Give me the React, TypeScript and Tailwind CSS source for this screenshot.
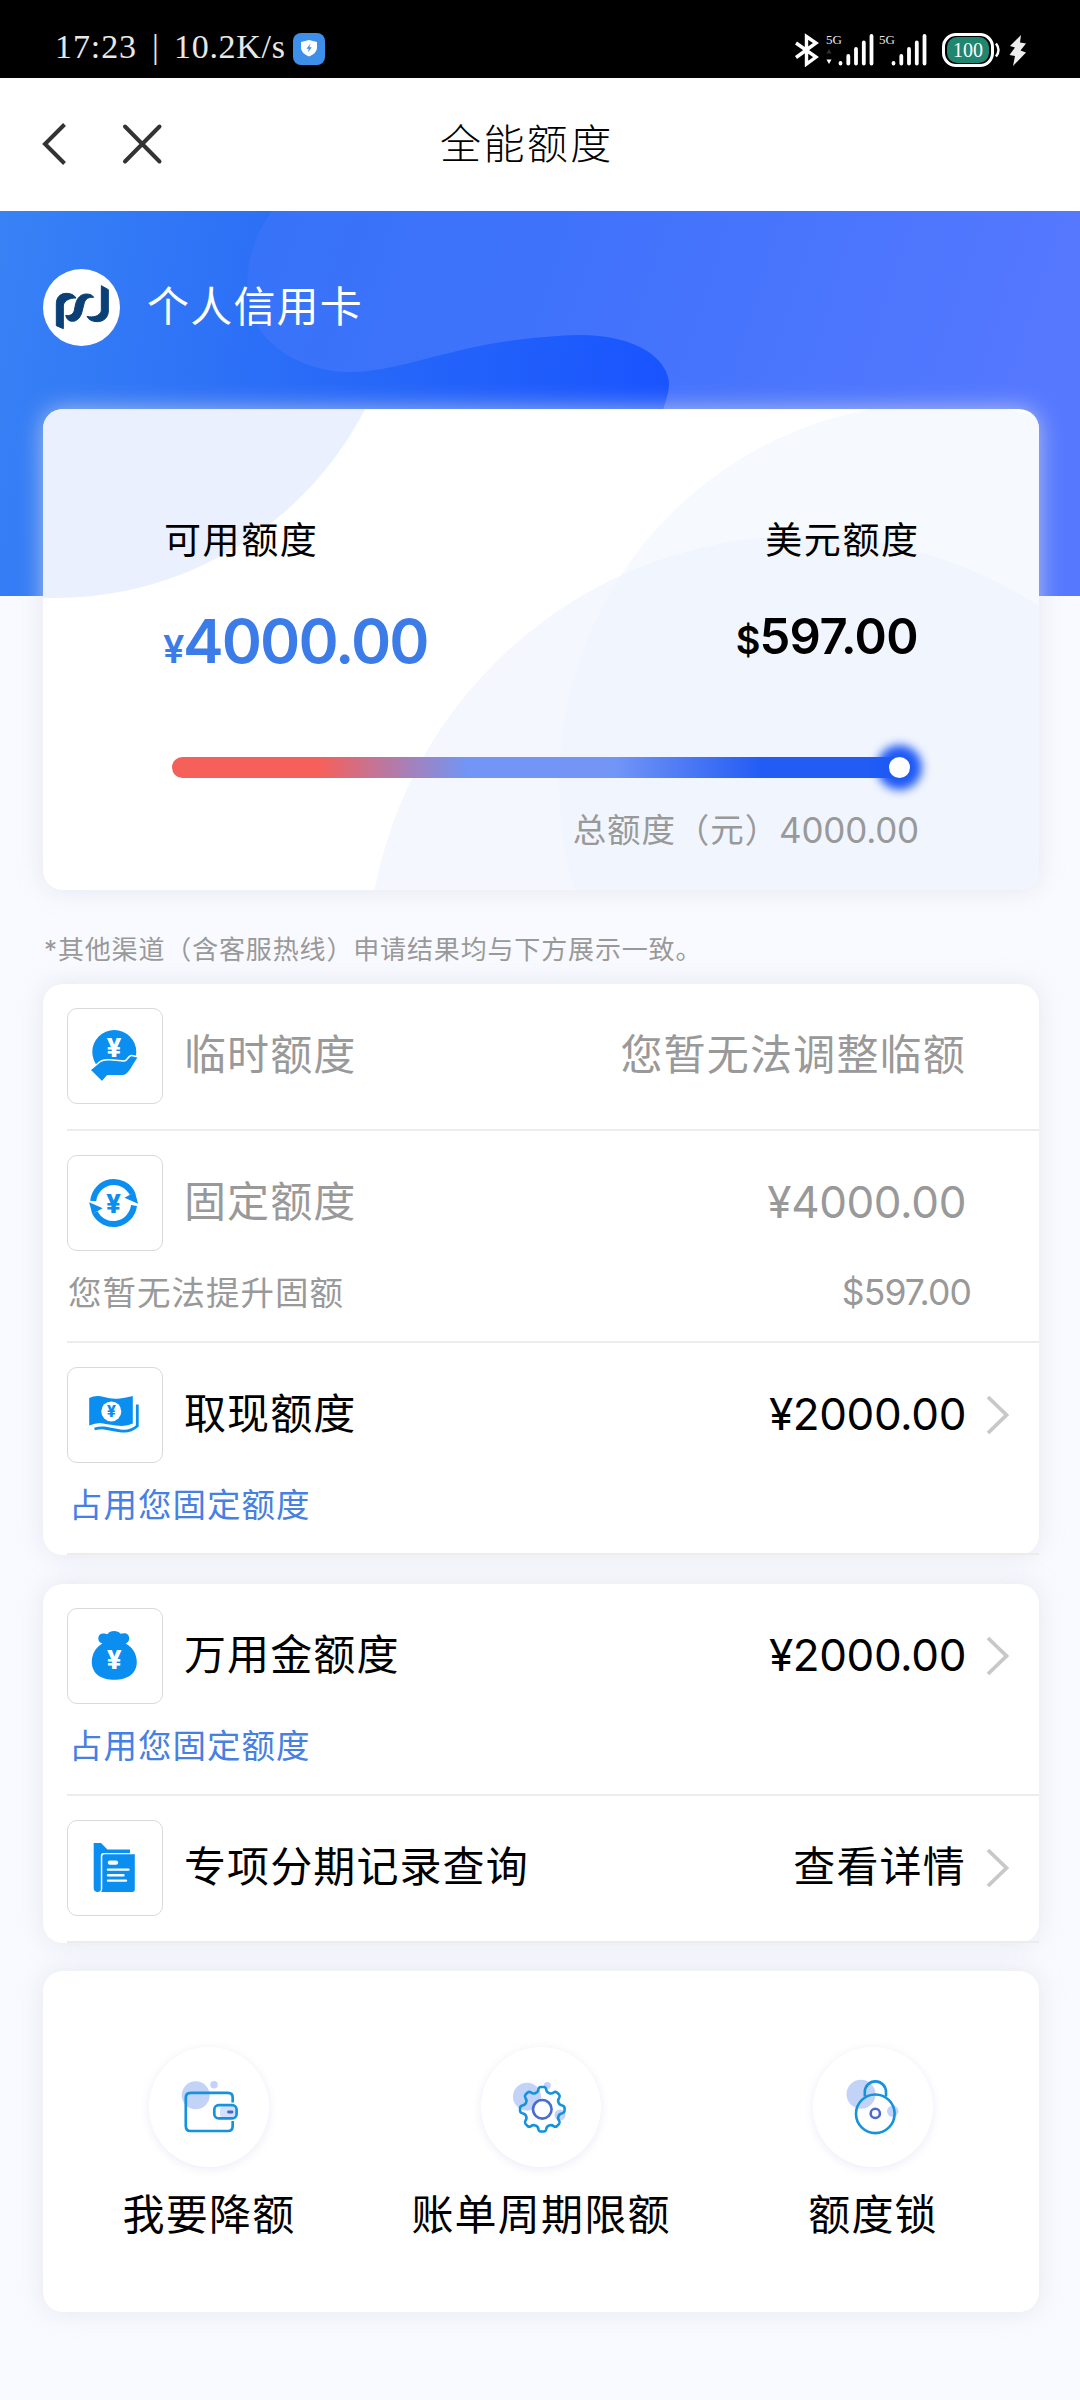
import type { ReactNode } from "react";

const BLUE = "#0a8ef0";

function Yuan({ x, y, size, fill }: { x: number; y: number; size: number; fill: string }) {
  return (
    <text x={x} y={y} fontSize={size} fill={fill} fontWeight={800} textAnchor="middle" fontFamily="Inter, sans-serif">
      ¥
    </text>
  );
}

function HandIcon() {
  return (
    <svg viewBox="0 0 96 96" className="size-full">
      <circle cx="48.3" cy="44" r="22" fill={BLUE} />
      <path
        d="M24 62 L33 54.5 C36 51.5 40 51.5 44 51.8 L58 53 C61 53 61 50 64 48 C66.5 46 69 49.5 73 48.5 L67 58 C64 63 61.5 67.8 57 67.8 L41.5 67.8 L36 74 Z"
        fill={BLUE}
        stroke="#fff"
        strokeWidth="1.6"
      />
      <Yuan x={48} y={49} size={26} fill="#fff" />
    </svg>
  );
}

function CycleIcon() {
  return (
    <svg viewBox="0 0 96 96" className="size-full">
      <g fill="none" stroke={BLUE} strokeWidth="6">
        <path d="M27.2 46 A20.8 21.3 0 0 1 66.5 38.8" />
        <path d="M68 50.5 A20.8 21.3 0 0 1 28.9 57.5" />
      </g>
      <g fill={BLUE}>
        <path d="M72 48.8 L58.5 42.8 L69 37 Z" />
        <path d="M23.2 47.2 L36.7 53.2 L26.2 59 Z" />
      </g>
      <Yuan x={47.6} y={58} size={26} fill={BLUE} />
    </svg>
  );
}

function CashIcon() {
  return (
    <svg viewBox="0 0 96 96" className="size-full">
      <path d="M23.2 31 Q30 27.5 38 30 T54 31.5 Q60 30.5 66.8 29 V56.5 Q60 60 50 58.5 T34 56 Q29 56 23.2 58.5 Z" fill={BLUE} />
      <path d="M71.3 37.5 V59 Q64 65.5 54 63.8 T38 61 Q33 60.8 28.5 62" fill="none" stroke={BLUE} strokeWidth="2.8" />
      <circle cx="45.3" cy="44.4" r="10" fill="#fff" />
      <Yuan x={45.3} y={50.2} size={16} fill={BLUE} />
    </svg>
  );
}

function BagIcon() {
  return (
    <svg viewBox="0 0 96 96" className="size-full">
      <path
        d="M36.5 35.5 C31 35 31 26.5 36 25.6 C39 25 41 26.5 42 25.8 C43.5 22.3 52 22 54.5 25.8 C57 25 61 24.5 62.5 27.5 C64.5 31.5 62 35 59.5 35.5 C66.5 39 70.8 46 70.8 54 C70.8 66 61 71.8 48.3 71.8 C35.5 71.8 25.8 66 25.8 54 C25.8 46 30 39 36.5 35.5 Z"
        fill={BLUE}
      />
      <Yuan x={48.2} y={61} size={26} fill="#fff" />
    </svg>
  );
}

function RecordIcon() {
  return (
    <svg viewBox="0 0 96 96" className="size-full">
      <path d="M27.7 23 H35 L41.5 29.5 H64 V33 H37 Q34.8 33 34.8 35.5 V70 Q34 72.3 31 72 Q27.7 71.5 27.7 68 Z" fill={BLUE} />
      <path d="M36.3 36.5 Q36.3 34.3 38.5 34.3 H68.8 V69.5 Q68.8 72 66 72 H35 Q36.3 71 36.3 69 Z" fill={BLUE} />
      <path d="M44 42.6 H50" stroke="#fff" strokeWidth="4.4" strokeLinecap="round" />
      <path d="M42 49.6 H62.5 M42 55.2 H57.5 M42 60.6 H60" stroke="#fff" strokeWidth="2.4" strokeLinecap="round" />
    </svg>
  );
}

function WalletIcon() {
  return (
    <svg viewBox="0 0 120 120" className="size-full" fill="none">
      <circle cx="46.7" cy="48.3" r="14" fill="#c3d3f8" />
      <circle cx="65" cy="37.8" r="3.8" fill="#c3d3f8" />
      <path d="M83.7 55.5 V50.5 Q83.7 45.8 79 45.8 H41.5 Q36.8 45.8 36.8 50.5 V79 Q36.8 84 41.5 84 H79 Q83.7 84 83.7 79 V74" stroke="#1592dc" strokeWidth="2.7" />
      <rect x="71" y="59.5" width="16" height="11" rx="3" fill="#d3dffb" />
      <rect x="65.3" y="58.2" width="22.3" height="13.2" rx="4.5" stroke="#1592dc" strokeWidth="2.7" />
      <path d="M79.5 65 H83" stroke="#4766cc" strokeWidth="2.8" strokeLinecap="round" />
    </svg>
  );
}

const TEETH = [0, 45, 90, 135, 180, 225, 270, 315];

/** Outline of an eight-toothed gear with rounded teeth, centred on (cx, cy). */
function gearPath(cx: number, cy: number, outer: number, inner: number) {
  const at = (deg: number, r: number) => {
    const a = ((deg - 90) * Math.PI) / 180;
    return `${(cx + r * Math.cos(a)).toFixed(2)} ${(cy + r * Math.sin(a)).toFixed(2)}`;
  };
  const segments = TEETH.map((t) => {
    const edge = outer - 2;
    return [
      `${t === 0 ? "M" : "L"}${at(t - 11, edge)}`,
      `Q${at(t - 9, outer)} ${at(t - 4, outer)}`,
      `L${at(t + 4, outer)}`,
      `Q${at(t + 9, outer)} ${at(t + 11, edge)}`,
      `Q${at(t + 14, inner)} ${at(t + 22.5, inner)}`,
      `Q${at(t + 31, inner)} ${at(t + 34, edge)}`,
    ].join(" ");
  });
  return `${segments.join(" ")} Z`;
}

function GearIcon() {
  return (
    <svg viewBox="0 0 120 120" className="size-full" fill="none">
      <circle cx="46" cy="49.7" r="14" fill="#c3d3f8" />
      <circle cx="66.3" cy="38.5" r="3.5" fill="#c3d3f8" />
      <circle cx="79" cy="68" r="5.5" fill="#c3d3f8" />
      <path d={gearPath(61.3, 62.3, 22.3, 17.6)} stroke="#1592dc" strokeWidth="2.6" strokeLinejoin="round" />
      <circle cx="61.3" cy="62.3" r="9.3" stroke="#4a6cd0" strokeWidth="2.6" fill="#fff" />
    </svg>
  );
}

function LockIcon() {
  return (
    <svg viewBox="0 0 120 120" className="size-full" fill="none">
      <circle cx="48" cy="47.3" r="14.5" fill="#c3d3f8" />
      <circle cx="79.7" cy="64.3" r="5.7" fill="#c3d3f8" />
      <path d="M51.8 49.5 V45 A10.6 10.6 0 0 1 73 45 V49.5" stroke="#1592dc" strokeWidth="2.6" />
      <circle cx="62.3" cy="66.8" r="19.3" stroke="#1592dc" strokeWidth="2.6" />
      <circle cx="62.3" cy="66.4" r="4.6" stroke="#4a6cd0" strokeWidth="2.6" />
    </svg>
  );
}

function Chevron() {
  return (
    <svg viewBox="0 0 24 40" className="h-[40px] w-[24px]" fill="none" stroke="#c8c8cb" strokeWidth="3.8">
      <path d="M2 2 L20.5 20 L2 38" />
    </svg>
  );
}

function SignalBars() {
  return (
    <svg viewBox="0 0 36 34" className="h-[34px] w-[36px]" stroke="#fff" strokeWidth="3.8" strokeLinecap="round">
      <path d="M2.5 30 V30.6 M10.3 23 V30.6 M18 16 V30.6 M25.8 9.5 V30.6 M33.5 3 V30.6" />
    </svg>
  );
}

function StatusBar() {
  return (
    <div className="flex h-[78px] items-start bg-black pl-[55px] pr-[53px] font-['Liberation_Serif',serif] text-[#e8e8e8]">
      <div className="flex pt-[26px] text-[34px] leading-[42px]">
        <span className="w-[92px] tracking-[0.9px]">17:23</span>
        <span className="w-[27px] pl-[5px]">|</span>
        <span className="w-[119px] tracking-[0.7px]">10.2K/s</span>
      </div>
      <svg viewBox="0 0 32 32" className="mt-[33px] size-[32px]">
        <rect width="32" height="32" rx="8" fill="#3d8fea" />
        <path d="M16 7 L24 9 V15 Q24 20 16 23.5 Q8 20 8 15 V9 Z" fill="#fff" />
        <path d="M17.5 10.5 L13.5 15.8 H15.8 L14.8 19.5 L18.8 14.2 H16.4 Z" fill="#3d8fea" />
      </svg>
      <div className="ml-auto flex items-start">
        <svg viewBox="0 0 24 34" className="mt-[33px] h-[34px] w-[24px]" fill="none" stroke="#fff" strokeWidth="3.4">
          <path d="M1 10 L21 24 L11.5 31 V3.5 L21 10 L1 24.5" />
        </svg>
        <div className="relative ml-[7px] mt-[33px] flex w-[48px] justify-end">
          <span className="absolute left-0 top-0 text-[13px] leading-[13px]">5G</span>
          <svg viewBox="0 0 6 16" className="absolute bottom-[2px] left-0 h-[16px] w-[6px]">
            <path d="M3 0 L5.5 4.5 H0.5 Z" fill="#333" />
            <path d="M3 15 L5.5 10.5 H0.5 Z" fill="#fff" />
          </svg>
          <SignalBars />
        </div>
        <div className="relative ml-[5px] mt-[33px] flex w-[48px] justify-end">
          <span className="absolute left-0 top-0 text-[13px] leading-[13px]">5G</span>
          <SignalBars />
        </div>
        <div className="ml-[15px] mt-[33px] flex items-center">
          <div className="flex h-[34px] w-[52px] items-center justify-center rounded-[14px] border-[3px] border-white p-[2px]">
            <div className="flex h-[26px] w-full items-center justify-center rounded-[10px] bg-[#20866f] text-[20px] leading-[26px] text-white">100</div>
          </div>
          <svg viewBox="0 0 6 16" className="ml-px h-[16px] w-[6px]" fill="none" stroke="#fff" strokeWidth="2.4">
            <path d="M1 1.5 Q6 8 1 14.5" />
          </svg>
        </div>
        <svg viewBox="0 0 18 32" className="ml-[8px] mt-[35px] h-[32px] w-[18px]" fill="#eee">
          <path d="M12 0 L1 11 L6 12.5 L0.5 20 L6 21 L4 31 L17 17.5 L11.5 15.5 L17 8.5 L11 7.5 Z" />
        </svg>
      </div>
    </div>
  );
}

function TitleBar() {
  return (
    <div className="flex h-[133px] items-center bg-white pb-[2px] pl-[42px]">
      <svg viewBox="0 0 26 44" className="h-[44px] w-[26px]" fill="none" stroke="#333" strokeWidth="4">
        <path d="M22.5 2.5 L3 22 L22.5 41.5" />
      </svg>
      <svg viewBox="0 0 42 42" className="ml-[53px] size-[42px]" fill="none" stroke="#333" strokeWidth="4" strokeLinecap="round">
        <path d="M4 3.5 L38.5 38.5 M38.5 3.5 L4 38.5" />
      </svg>
      <h1 className="ml-[277px] font-['Kaiti_SC','KaiTi','Inter','Noto_Sans_CJK_SC',sans-serif] text-[41px] font-light leading-[48px] tracking-[2.4px] text-black">全能额度</h1>
    </div>
  );
}

function BankLogo() {
  return (
    <svg viewBox="9 14 231 231" className="h-[77px] w-[77px]">
      <circle cx="124.5" cy="129.5" r="115.5" fill="#fff" />
      <g fill="#0a4076" stroke="#0a4076" strokeWidth="3" strokeLinejoin="round">
        <path d="M49 184 L70 193 V122 C75 108 88 101 108 101 C102 91 91 87 79 87 C60 87 49 100 49 118 Z" />
        <path d="M77 153 C90 156 100 150 103 138 L107 118 C112 100 123 89 139 89 C150 89 157 92 161 99 C146 98 137 103 133 115 L125 146 C119 163 109 171 97 171 C87 171 80 165 77 153 Z" />
        <path d="M184 64 L205 76 V140 C205 160 190 172 172 172 C157 172 146 167 141 156 C160 161 179 155 184 140 Z" />
      </g>
    </svg>
  );
}

function Hero() {
  return (
    <div className="relative h-[385px] overflow-hidden bg-[linear-gradient(100deg,#3882f5_0%,#2c6ff7_24%,#205efb_48%,#1853ff_62%)]">
      <svg viewBox="0 0 1080 385" className="absolute inset-0 h-[385px] w-[1080px]">
        <defs>
          <linearGradient id="wave" x1="0" y1="0" x2="1" y2="0.15">
            <stop offset="0" stopColor="#3673f8" />
            <stop offset="0.4" stopColor="#4072fb" />
            <stop offset="1" stopColor="#5578ff" />
          </linearGradient>
        </defs>
        <path
          d="M272 0 C250 30 243 65 250 95 C260 140 310 161 350 161 C410 161 460 127 580 124 C640 124 668 150 669 172 C669 185 664 192 662 204 L650 385 H1080 V0 Z"
          fill="url(#wave)"
        />
      </svg>
      <div className="relative flex items-center pl-[43px] pt-[58px]">
        <BankLogo />
        <span className="mb-[2px] ml-[27px] text-[42px] leading-[60px] tracking-[1.2px] text-white">个人信用卡</span>
      </div>
    </div>
  );
}

function QuotaCard() {
  return (
    <section className="relative -mt-[187px] ml-[43px] h-[481px] w-[996px] rounded-[20px] bg-white shadow-[0_0_24px_0_rgba(222,224,232,0.7)]">
      <svg viewBox="0 0 996 481" className="absolute inset-0 h-[481px] w-[996px] rounded-[20px]">
        <defs>
          <clipPath id="upper-disc">
            <circle cx="896" cy="374" r="380" />
          </clipPath>
        </defs>
        <circle cx="12" cy="-160" r="349" fill="#eaf0fe" />
        <circle cx="759" cy="562" r="435" fill="#f4f7fe" />
        <circle cx="896" cy="374" r="380" fill="#f6f9fe" />
        <circle cx="759" cy="562" r="435" fill="#f1f5fd" clipPath="url(#upper-disc)" />
      </svg>
      <div className="relative flex h-full flex-col px-[121px] pt-[108px]">
        <div className="flex justify-between text-[37px] leading-[48px] text-black">
          <span className="tracking-[1.6px]">可用额度</span>
          <span className="-mr-[1.6px] tracking-[1.6px]">美元额度</span>
        </div>
        <div className="flex items-start justify-between pt-[36px] font-semibold leading-[72px]">
          <div className="pt-[4px] text-[#3c7ce8]">
            <span className="-ml-[1px] text-[38px] tracking-[-1.4px]">¥</span>
            <span className="text-[61px] tracking-[-1.9px]">4000.00</span>
          </div>
          <div className="text-black">
            <span className="text-[38px] tracking-[-1px]">$</span>
            <span className="text-[49px] tracking-[-0.6px]">597.00</span>
          </div>
        </div>
        <div className="relative ml-[8px] mt-[64px] h-[21px] w-[738px] shrink-0 rounded-full bg-[linear-gradient(90deg,#f5605a_0%,#f5605a_20%,#7295f6_40%,#7295f6_60%,#225cf5_80%)]">
          <div className="absolute right-0 top-0 size-[21px] rounded-full bg-white shadow-[0_0_10px_12px_#1f5af5]" />
        </div>
        <div className="-mr-[1px] mt-[26px] flex items-center justify-end text-[33.5px] leading-[52px] text-[#999]">
          <span className="tracking-[0.9px]">总额度（元）</span>
          <span className="text-[35px] tracking-[-0.2px]">4000.00</span>
        </div>
      </div>
    </section>
  );
}

type RowProps = {
  icon: ReactNode;
  label: string;
  value: string;
  muted?: boolean;
  note?: string;
  noteValue?: string;
};

function Row({ icon, label, value, muted, note, noteValue }: RowProps) {
  return (
    <div className={note ? "ml-[24px] h-[212px] border-b-2 border-[#ececec] pt-[24px]" : "ml-[24px] h-[147px] border-b-2 border-[#ececec] pt-[24px]"}>
      <div className={muted ? "flex h-[96px] items-center text-[#999]" : "flex h-[96px] items-center text-black"}>
        <div className="size-[96px] shrink-0 rounded-[10px] border border-[#d9d9d9]">
          <div className="-ml-[2px] -mt-px size-[96px]">{icon}</div>
        </div>
        <span className="mb-[3px] ml-[21px] text-[42px] leading-[60px] tracking-[1.1px]">{label}</span>
        <span className={value.startsWith("¥") ? "mb-[3px] ml-auto text-[44px] leading-[60px] tracking-[-0.4px]" : "mb-[3px] ml-auto text-[42px] leading-[60px] tracking-[1.2px]"}>{value}</span>
        <div className="ml-[20px] mr-[29px] flex w-[24px] items-center">{muted ? null : <Chevron />}</div>
      </div>
      {note ? (
        <div className={muted ? "flex items-center justify-between pl-px pr-[68px] pt-[18px] text-[#999]" : "flex items-center pl-[2px] pt-[18px] text-[#4680e2]"}>
          <span className="text-[33.5px] leading-[48px] tracking-[1px]">{note}</span>
          {noteValue ? <span className="text-[35.5px] leading-[48px] tracking-[-0.9px]">{noteValue}</span> : null}
        </div>
      ) : null}
    </div>
  );
}

function Panel({ className, children }: { className: string; children: ReactNode }) {
  return <section className={`ml-[43px] w-[996px] rounded-[20px] bg-white shadow-[0_0_24px_0_rgba(222,224,232,0.7)] ${className}`}>{children}</section>;
}

function Action({ icon, label }: { icon: ReactNode; label: string }) {
  return (
    <div className="flex flex-col items-center">
      <div className="size-[120px] rounded-full bg-white shadow-[0_2px_10px_0_rgba(110,110,200,0.14)]">{icon}</div>
      <span className="mt-[18px] text-[42px] leading-[60px] tracking-[1.2px] text-black">{label}</span>
    </div>
  );
}

export default function App() {
  return (
    <div className="h-[2400px] w-[1080px] overflow-hidden bg-[#f8faff] font-['Inter','Noto_Sans_CJK_SC',sans-serif]">
      <StatusBar />
      <TitleBar />
      <Hero />
      <QuotaCard />
      <p className="ml-[44px] mt-[40px] h-[54px] text-[26px] leading-[40px] tracking-[0.85px] text-[#999]">*其他渠道（含客服热线）申请结果均与下方展示一致。</p>
      <Panel className="">
        <Row icon={<HandIcon />} label="临时额度" value="您暂无法调整临额" muted />
        <Row icon={<CycleIcon />} label="固定额度" value="¥4000.00" muted note="您暂无法提升固额" noteValue="$597.00" />
        <Row icon={<CashIcon />} label="取现额度" value="¥2000.00" note="占用您固定额度" />
      </Panel>
      <Panel className="mt-[29px]">
        <Row icon={<BagIcon />} label="万用金额度" value="¥2000.00" note="占用您固定额度" />
        <Row icon={<RecordIcon />} label="专项分期记录查询" value="查看详情" />
      </Panel>
      <Panel className="mt-[28px] grid h-[341px] grid-cols-3 pt-[76px]">
        <Action icon={<WalletIcon />} label="我要降额" />
        <Action icon={<GearIcon />} label="账单周期限额" />
        <Action icon={<LockIcon />} label="额度锁" />
      </Panel>
    </div>
  );
}
